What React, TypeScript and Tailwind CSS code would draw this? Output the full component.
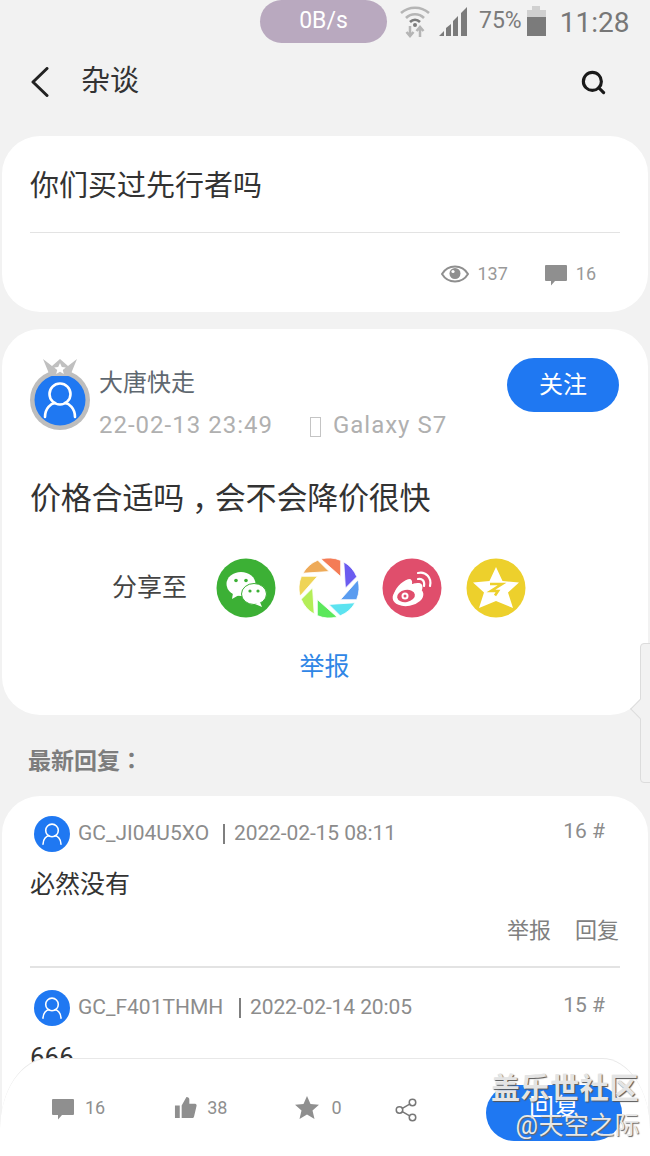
import { Search, Share2 } from "lucide-react"

const CJK = "font-['Roboto','Noto_Sans_CJK_SC',sans-serif]"

function UserIcon({ size, ring }: { size: number; ring?: boolean }) {
  return (
    <svg width={size} height={size} viewBox="0 0 60 60">
      {ring && <circle cx="30" cy="30" r="30" fill="#bdbdbd" />}
      <circle cx="30" cy="30" r={ring ? 25.5 : 30} fill="#1f78f2" />
      <circle cx="30" cy="24" r="10.5" fill="none" stroke="#fff" strokeWidth="2.6" />
      <path d="M15 47c0-9 6-13.500 10-14M45 47c0-9-6-13.500-10-14" fill="none" stroke="#fff" strokeWidth="2.6" strokeLinecap="round" />
    </svg>
  )
}

function Bubble({ size }: { size: number }) {
  return (
    <svg width={size} height={size} viewBox="0 0 24 24">
      <path d="M2 3h20a1 1 0 0 1 1 1v14a1 1 0 0 1-1 1H11l-4 4.500V19H2a1 1 0 0 1-1-1V4a1 1 0 0 1 1-1z" fill="#8f8f8f" />
    </svg>
  )
}

function Aperture() {
  const colors = ["#f47c56", "#6b5cf0", "#5a9cf0", "#5ce3f0", "#5ce85c", "#b4ee58", "#efd457", "#eeaa58"]
  return (
    <svg width="60" height="60" viewBox="-30 -30 60 60">
      {colors.map((c, i) => (
        <path
          key={c}
          transform={`rotate(${i * 45})`}
          d="M-8 -28.900A30 30 0 0 1 11.700 -27.600L11.700 -11.500z"
          fill={c}
          stroke="#fff"
          strokeWidth="0.800"
        />
      ))}
    </svg>
  )
}

function WeChat() {
  return (
    <svg width="60" height="60" viewBox="0 0 60 60">
      <circle cx="30" cy="30" r="29.500" fill="#3cb035" />
      <ellipse cx="25" cy="26" rx="14.500" ry="12" fill="#fff" />
      <path d="M17 35l-1 6 7-4z" fill="#fff" />
      <ellipse cx="38" cy="36" rx="12.500" ry="10.500" fill="#fff" stroke="#3cb035" strokeWidth="1" />
      <path d="M44 44l2 5-7-3z" fill="#fff" />
      <circle cx="20" cy="22.500" r="1.800" fill="#3cb035" />
      <circle cx="30" cy="22.500" r="1.800" fill="#3cb035" />
      <circle cx="34" cy="33" r="1.600" fill="#3cb035" />
      <circle cx="42" cy="33" r="1.600" fill="#3cb035" />
    </svg>
  )
}

function Weibo() {
  return (
    <svg width="60" height="60" viewBox="0 0 60 60">
      <circle cx="30" cy="30" r="29.500" fill="#e04e6c" />
      <ellipse cx="26" cy="38" rx="15.500" ry="10" fill="#fff" transform="rotate(-10 26 38)" />
      <path d="M12 36c2-8 11-15 16-15 3 1 2 5 2 5s9-3 10 1c1 2 0 5 0 5z" fill="#fff" />
      <ellipse cx="24" cy="38" rx="9" ry="6" fill="#e04e6c" transform="rotate(-10 24 38)" />
      <circle cx="23" cy="38" r="3.500" fill="#fff" />
      <circle cx="23" cy="38" r="1.500" fill="#e04e6c" />
      <path d="M36 21c4-1 7 2 6 7M36 15c8-2 14 5 12 13" fill="none" stroke="#fff" strokeWidth="2.200" strokeLinecap="round" />
    </svg>
  )
}

function QZone() {
  return (
    <svg width="60" height="60" viewBox="0 0 60 60">
      <circle cx="30" cy="30" r="29.500" fill="#edd02c" />
      <path d="M30 9l6.500 14 16.500 1.500-11 10 5 15.500-17-7-17 7 5-15.500-11-10 16.500-1.500z" fill="#fff" />
      <path d="M24 26h12l-11 7h7l-3 4.500" fill="none" stroke="#edd02c" strokeWidth="2.600" />
    </svg>
  )
}

function StatusBar() {
  return (
    <div className="flex h-[44px] items-start">
      <div className="ml-[260px] flex h-[43px] w-[127px] items-center justify-center rounded-[22px] bg-[#b9a9bf] text-[23px] text-white">
        0B/s
      </div>
      <svg className="ml-[12px] mt-[4px]" width="32" height="34" viewBox="0 0 32 34">
        <path d="M2 9c8-7 20-7 28 0M7 14c5-5 13-5 18 0" fill="none" stroke="#b5b5b5" strokeWidth="2.600" />
        <path d="M11 18c3-3 7-3 10 0" fill="none" stroke="#7b7b7b" strokeWidth="2.600" />
        <circle cx="16" cy="21" r="2" fill="#7b7b7b" />
        <path d="M11 22v9M7.500 28l3.500 4 3.500-4M21 33v-9M17.500 27l3.500-4 3.500 4" fill="none" stroke="#b5b5b5" strokeWidth="2.500" />
      </svg>
      <svg className="ml-[7px] mt-[7px]" width="30" height="29" viewBox="0 0 30 29">
        <path d="M1 29l5-5v5zM8 29v-8l5-4v12zM15 29V14l5-5v20zM23 29V6l6-6v29z" fill="#7b7b7b" />
      </svg>
      <span className="ml-[11px] mt-[8px] text-[23px] leading-[26px] text-[#7b7b7b]">75%</span>
      <div className="ml-[5px] mt-[6px] flex flex-col items-center">
        <div className="h-[4px] w-[8px] bg-[#d0d0d0]" />
        <div className="h-[7px] w-[19px] bg-[#d0d0d0]" />
        <div className="h-[19px] w-[19px] bg-[#7b7b7b]" />
      </div>
      <span className="ml-[14px] mt-[6px] text-[28px] leading-[34px] text-[#777]">11:28</span>
    </div>
  )
}

function Reply({ name, time, floor, nameWidth }: { name: string; time: string; floor: string; nameWidth: string }) {
  return (
    <div className="flex items-center pl-[32px] pr-[43px]">
      <UserIcon size={36} />
      <span className={`ml-[8px] text-[21px] text-[#8c8c8c] ${nameWidth}`}>{name}</span>
      <span className="ml-[15px] h-[20px] w-[2px] bg-[#7f7f7f]" />
      <span className="ml-[9px] text-[21px] tracking-[-0.1px] text-[#8c8c8c]">{time}</span>
      <span className="ml-auto mb-[4px] text-[21px] text-[#8c8c8c]">{floor}</span>
    </div>
  )
}

export default function App() {
  return (
    <div className={`relative h-[1156px] w-[650px] overflow-hidden bg-[#f2f2f2] ${CJK}`}>
      <StatusBar />

      <div className="flex h-[92px] items-center pb-[16px] pl-[30px] pr-[43px]">
        <svg width="20" height="30" viewBox="0 0 20 30">
          <path d="M17 1.500L3 15l14 13.500" fill="none" stroke="#222" strokeWidth="3" strokeLinecap="round" strokeLinejoin="round" />
        </svg>
        <span className="ml-[31px] text-[29px] text-[#333]">杂谈</span>
        <Search size={27} strokeWidth={2.800} className="ml-auto text-[#1a1a1a]" />
      </div>

      <div className="mx-[2px] h-[176px] rounded-[38px] bg-white px-[28px] pt-[29px]">
        <div className="h-[68px] border-b border-[#e3e3e3] text-[29px] leading-[42px] text-[#333]">你们买过先行者吗</div>
        <div className="mt-[27px] flex items-center justify-end pr-[24px] text-[18px] text-[#999]">
          <svg width="28" height="18" viewBox="0 0 28 18">
            <path d="M1 9c6-10 20-10 26 0-6 10-20 10-26 0z" fill="none" stroke="#8f8f8f" strokeWidth="2" />
            <circle cx="14" cy="8.500" r="5.500" fill="#8f8f8f" />
            <circle cx="12" cy="6.500" r="1.600" fill="#fff" />
          </svg>
          <span className="ml-[8px]">137</span>
          <span className="ml-[36px]"><Bubble size={24} /></span>
          <span className="ml-[8px]">16</span>
        </div>
      </div>

      <div className="mx-[2px] mt-[17px] h-[386px] rounded-[38px] bg-white pl-[28px] pr-[29px] pt-[29px]">
        <div className="flex items-start">
          <div className="relative mt-[12px] h-[60px] w-[60px]">
            <UserIcon size={60} ring />
            <svg className="absolute left-[12px] top-[-12px]" width="36" height="20" viewBox="0 0 36 20">
              <path d="M1 1l7 17h20l7-17-9 7-8-7-8 7z" fill="#c0c0c0" />
              <path d="M18 5l1.800 4 4 .4-3 2.600 1 4-3.800-2.200-3.800 2.200 1-4-3-2.600 4-.4z" fill="#fff" />
            </svg>
          </div>
          <div className="ml-[9px] flex flex-col">
            <span className="mt-[2px] text-[24px] leading-[46px] text-[#5f6870]">大唐快走</span>
            <div className="flex items-center text-[24px] leading-[38px] tracking-[1px] text-[#b0b0b0]">
              <span>22-02-13 23:49</span>
              <span className="ml-[37px] mt-[4px] h-[20px] w-[11px] border border-[#c4c4c4]" />
              <span className="ml-[12px]">Galaxy S7</span>
            </div>
          </div>
          <div className="ml-auto flex h-[54px] w-[112px] items-center justify-center rounded-[27px] bg-[#1f78f2] text-[24px] text-white">
            关注
          </div>
        </div>
        <div className="mt-[33px] text-[31px] leading-[44px] tracking-[-0.2px] text-[#333]">
          价格合适吗<span className="inline-block translate-x-[8px] translate-y-[1px]">，</span>会不会降价很快
        </div>
        <div className="mt-[37px] flex items-center pl-[82px]">
          <span className="mr-[29px] text-[25px] text-[#444]">分享至</span>
          <WeChat />
          <span className="ml-[23px]"><Aperture /></span>
          <span className="ml-[23px]"><Weibo /></span>
          <span className="ml-[24px]"><QZone /></span>
        </div>
        <div className="mt-[31px] text-center text-[25px] leading-[36px] text-[#2f86e6]">举报</div>
      </div>

      <div className="ml-[28px] mt-[28px] text-[23px] font-bold leading-[32px] text-[#7d7d7d]">
        最新回复<span className="font-['Noto_Sans_CJK_TC']">：</span>
      </div>

      <div className="mx-[2px] mt-[18px] h-[400px] rounded-t-[38px] bg-white pt-[20px]">
        <Reply name="GC_JI04U5XO" time="2022-02-15 08:11" floor="16 #" nameWidth="w-[130px]" />
        <div className="mx-[28px] mt-[15px] text-[25px] leading-[36px] text-[#333]">必然没有</div>
        <div className="mr-[29px] mt-[10px] flex justify-end gap-[24px] text-[22px] leading-[36px] text-[#808080]">
          <span>举报</span>
          <span>回复</span>
        </div>
        <div className="mx-[28px] mt-[17px] border-t-2 border-[#e3e3e3]" />
        <div className="mt-[22px]">
          <Reply name="GC_F401THMH" time="2022-02-14 20:05" floor="15 #" nameWidth="w-[146px]" />
        </div>
        <div className="mx-[28px] mt-[13px] text-[26px] leading-[36px] text-[#333]">666</div>
      </div>

      {/* 右侧收起的抽屉把手 */}
      <div className="absolute left-[640px] top-[643px] h-[140px] w-[12px] rounded-l-[4px] border border-[#dcdcdc] bg-[#f2f2f2]" />
      <div className="absolute left-[633px] top-[702px] h-[14px] w-[14px] rotate-45 border-b border-l border-[#dcdcdc] bg-[#f2f2f2]" />

      {/* 底部操作栏 */}
      <div className="absolute bottom-0 left-0 flex h-[98px] w-[650px] items-center rounded-t-[48px_72px] border-t border-[#e8e8e8] bg-white pl-[51px] text-[18px] text-[#8f8f8f]">
        <Bubble size={24} />
        <span className="ml-[10px]">16</span>
        <svg className="ml-[69px]" width="23" height="23" viewBox="0 0 24 24">
          <path d="M1 10h5v13H1zM8 10l5-9c2 0 3 1 3 3v4h6c1 0 2 1 1.500 2.500L21 21c-.3 1.200-1 2-2 2H8z" fill="#8f8f8f" />
        </svg>
        <span className="ml-[10px]">38</span>
        <svg className="ml-[68px]" width="24" height="24" viewBox="0 0 24 24">
          <path d="M12 0l3.500 8 8.500.8-6.500 5.700 2 8.500-7.500-4.500L4.500 23l2-8.500L0 8.800 8.500 8z" fill="#8f8f8f" />
        </svg>
        <span className="ml-[12px]">0</span>
        <Share2 size={26} strokeWidth={1.400} className="ml-[51px] mt-[4px] text-[#777]" />
      </div>
      <div className="absolute left-[486px] top-[1085px] flex h-[56px] w-[136px] items-center justify-center rounded-[28px] bg-[#1f78f2] pb-[10px] text-[25px] text-white">
        回复
      </div>

      {/* 水印 */}
      <div className="absolute right-[11px] top-[1069px] text-right text-[29px] font-bold leading-[40px] tracking-[0.6px] text-[#e4e4e4] [text-shadow:1px_1px_1px_#555]">
        盖乐世社区
      </div>
      <div className="absolute right-[10px] top-[1108px] text-[25px] leading-[36px] tracking-[0.4px] text-[#e8e8e8] [text-shadow:1px_1px_1px_#666]">
        @天空之际
      </div>
    </div>
  )
}
